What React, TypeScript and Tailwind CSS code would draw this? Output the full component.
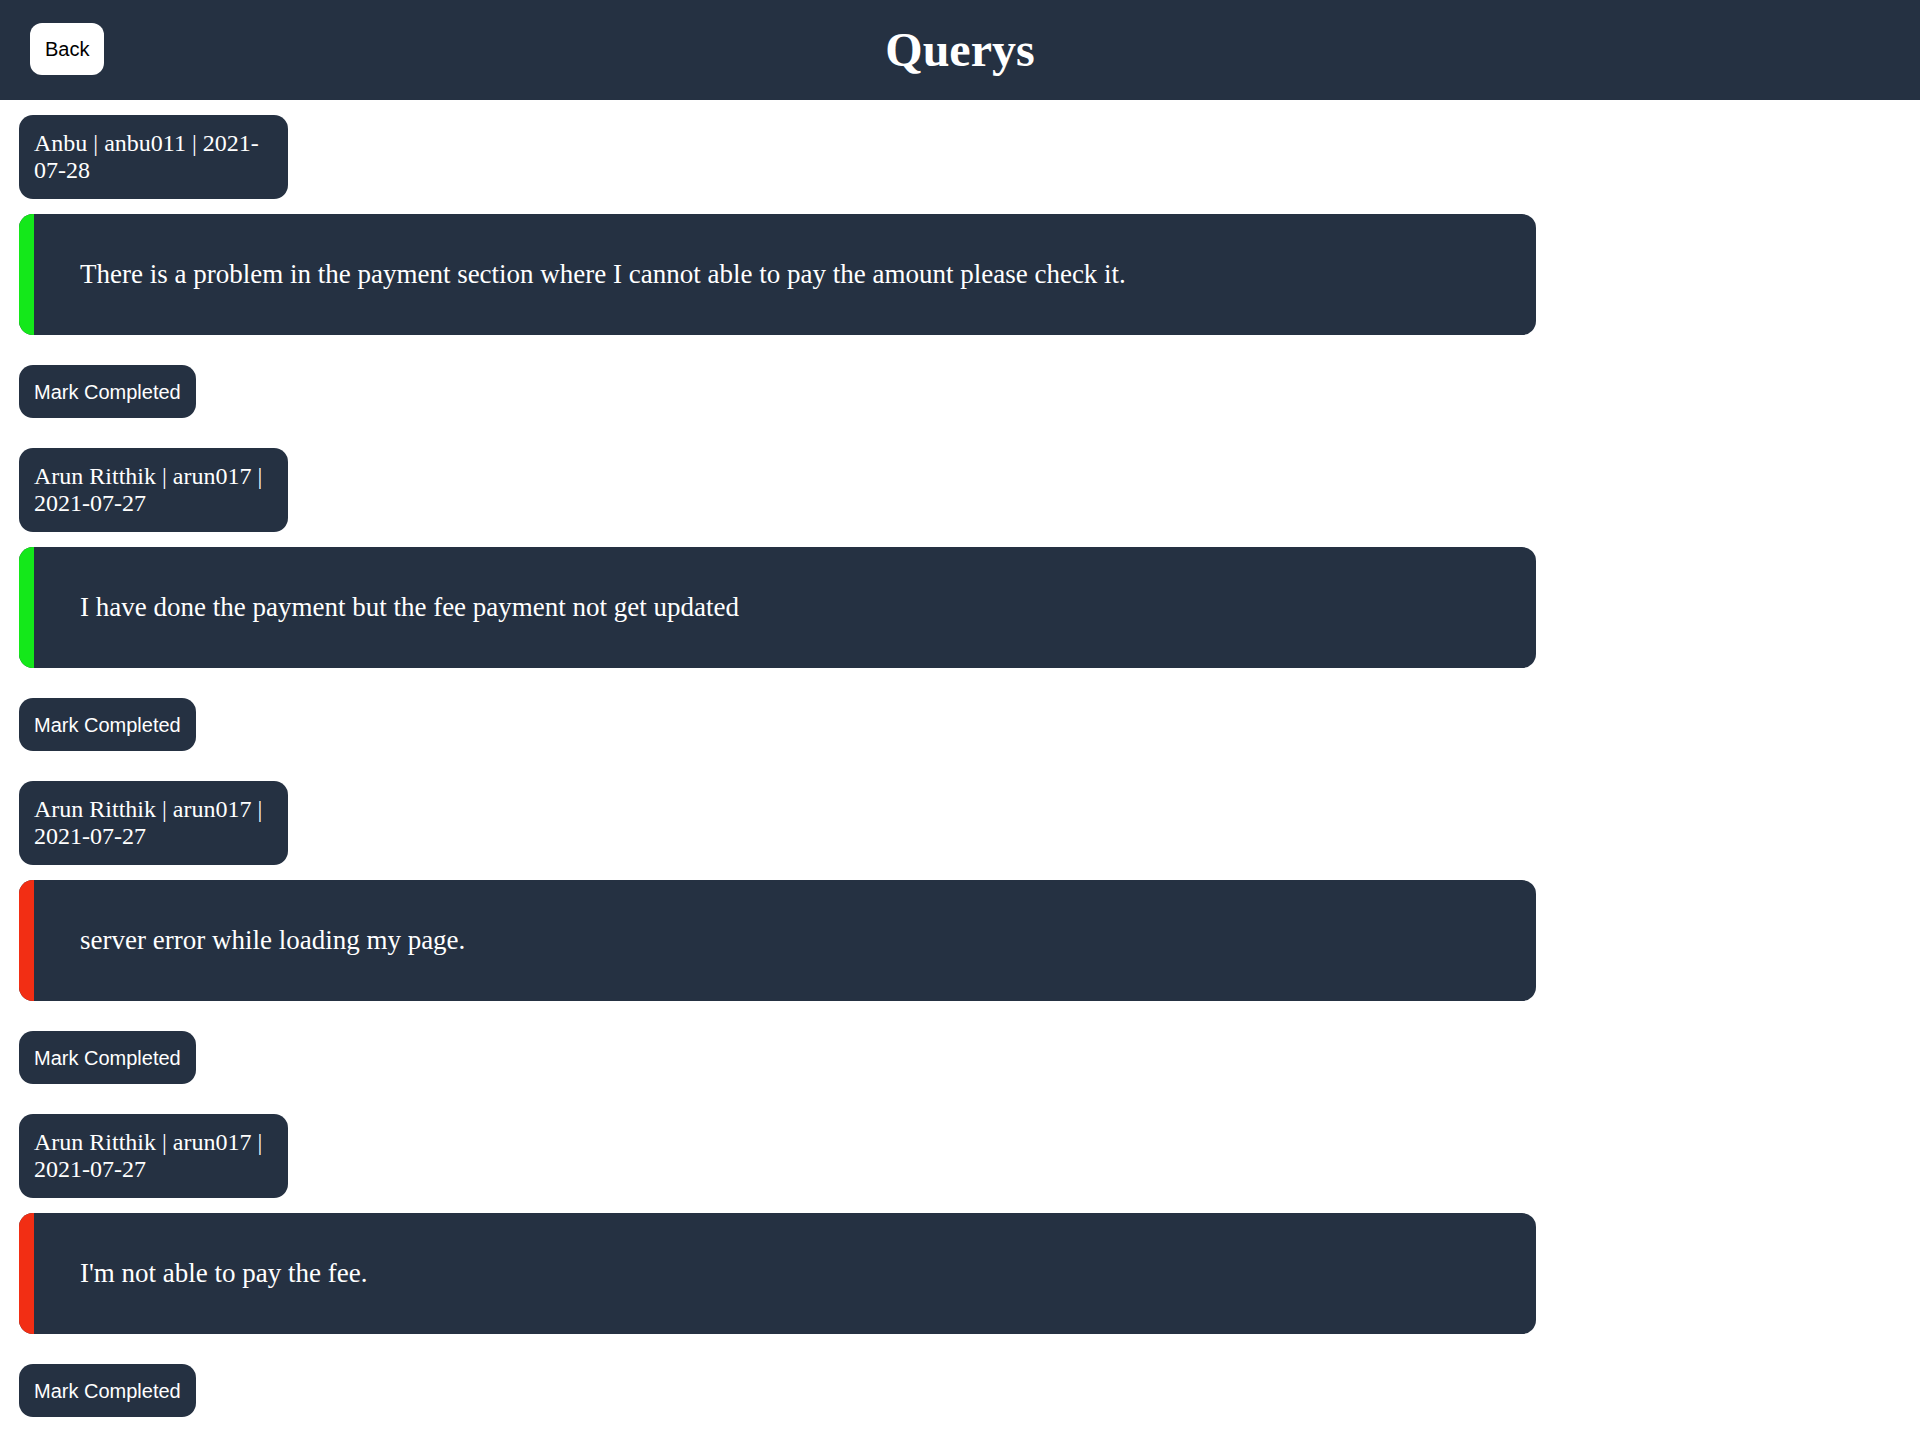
type Query = {
  name: string;
  user: string;
  date: string;
  text: string;
  solved: boolean;
};

const queries: Query[] = [
  {
    name: 'Anbu',
    user: 'anbu011',
    date: '2021-07-28',
    text: 'There is a problem in the payment section where I cannot able to pay the amount please check it.',
    solved: true,
  },
  {
    name: 'Arun Ritthik',
    user: 'arun017',
    date: '2021-07-27',
    text: 'I have done the payment but the fee payment not get updated',
    solved: true,
  },
  {
    name: 'Arun Ritthik',
    user: 'arun017',
    date: '2021-07-27',
    text: 'server error while loading my page.',
    solved: false,
  },
  {
    name: 'Arun Ritthik',
    user: 'arun017',
    date: '2021-07-27',
    text: "I'm not able to pay the fee.",
    solved: false,
  },
];

function QueryItem({ q }: { q: Query }) {
  return (
    <div className="flex flex-col items-start">
      <div className="w-[269px] rounded-[14px] bg-[#253142] px-[15px] py-[15px] text-[24px] leading-[27px] text-white font-['Liberation_Serif',serif]">
        {q.name} | {q.user} | {q.date}
      </div>
      <div className="mt-[15px] flex w-[1517px] overflow-hidden rounded-[14px] bg-[#253142]">
        <div className={q.solved ? 'w-[15px] shrink-0 bg-[#14e81a]' : 'w-[15px] shrink-0 bg-[#f22e14]'}></div>
        <p className="flex-1 py-[45px] pl-[46px] pr-6 text-[27px] leading-[31px] text-white font-['Liberation_Serif',serif]">
          {q.text}
        </p>
      </div>
      <button className="mt-[30px] h-[53px] rounded-[14px] bg-[#253142] px-[15px] text-[20px] text-white font-['Liberation_Sans',Arial,sans-serif]">
        Mark Completed
      </button>
    </div>
  );
}

export default function App() {
  return (
    <div className="min-h-screen bg-white">
      <header className="relative flex h-[100px] items-center justify-center bg-[#253142]">
        <button className="absolute left-[30px] top-[23px] h-[52px] rounded-[12px] bg-white px-[15px] text-[20px] text-black font-['Liberation_Sans',Arial,sans-serif]">
          Back
        </button>
        <h1 className="text-[48px] font-bold text-white font-['Liberation_Serif',serif]">Querys</h1>
      </header>
      <main className="flex flex-col gap-[30px] px-[19px] pt-[15px] pb-[20px]">
        {queries.map((q, i) => (
          <QueryItem key={i} q={q} />
        ))}
      </main>
    </div>
  );
}
